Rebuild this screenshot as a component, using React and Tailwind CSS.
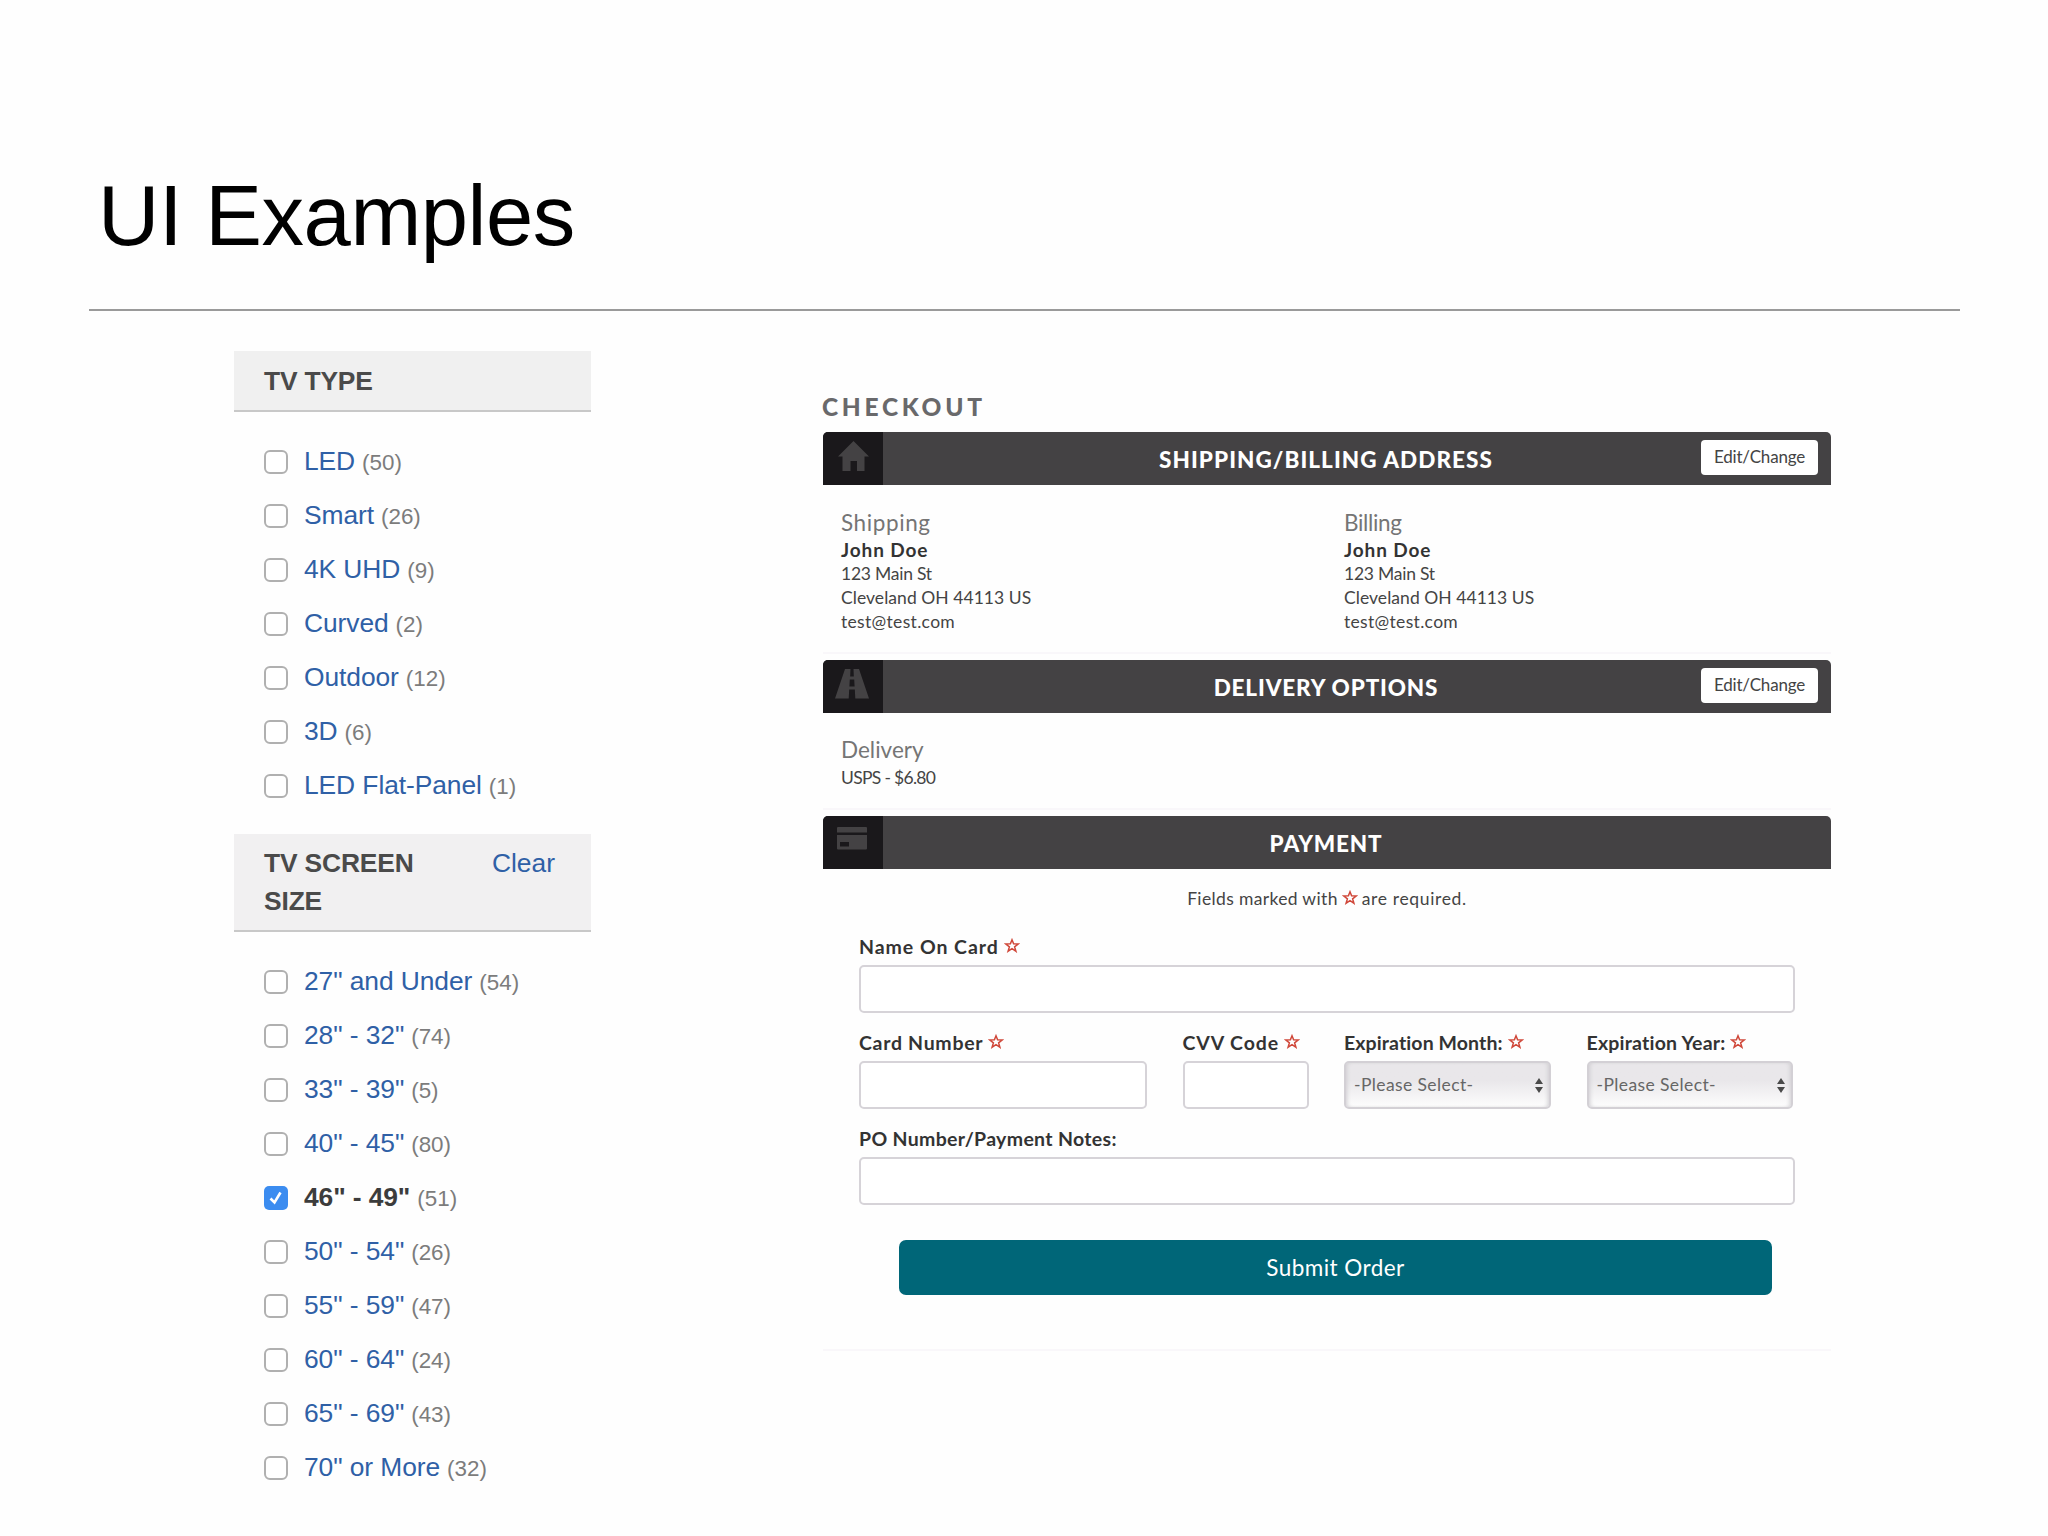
const TV_TYPES = [
  { label: "LED", count: 50 },
  { label: "Smart", count: 26 },
  { label: "4K UHD", count: 9 },
  { label: "Curved", count: 2 },
  { label: "Outdoor", count: 12 },
  { label: "3D", count: 6 },
  { label: "LED Flat-Panel", count: 1 },
];

const SCREEN_SIZES = [
  { label: '27" and Under', count: 54 },
  { label: '28" - 32"', count: 74 },
  { label: '33" - 39"', count: 5 },
  { label: '40" - 45"', count: 80 },
  { label: '46" - 49"', count: 51, checked: true },
  { label: '50" - 54"', count: 26 },
  { label: '55" - 59"', count: 47 },
  { label: '60" - 64"', count: 24 },
  { label: '65" - 69"', count: 43 },
  { label: '70" or More', count: 32 },
];

function Checkbox({ checked }) {
  if (checked) {
    return (
      <span className="flex size-6 items-center justify-center rounded-[5px] bg-[#3b8cf0]">
        <svg width="16" height="16" viewBox="0 0 16 16" fill="none" stroke="#fff" strokeWidth="2.6">
          <path d="M2.5 8.5 L6.5 12.5 L12.5 2.5" />
        </svg>
      </span>
    );
  }
  return <span className="size-6 rounded-[6px] border-2 border-[#b0b0b0] bg-white" />;
}

function FilterList({ items }) {
  return (
    <ul className="mt-[23px] pl-[29px]">
      {items.map(({ label, count, checked }) => (
        <li key={label} className="flex h-[54px] items-center whitespace-pre">
          <Checkbox checked={checked} />
          <span className="ml-[16px] flex items-baseline gap-[7px]">
            {checked ? (
              <span className="text-[26.4px] font-bold tracking-[-0.1px] text-[#3c3c3c]">{label}</span>
            ) : (
              <span className="text-[26.4px] tracking-[-0.08px] text-[#2f60a6]">{label}</span>
            )}
            <span className="text-[22.4px] text-[#7c7c7c]">({count})</span>
          </span>
        </li>
      ))}
    </ul>
  );
}

function HomeIcon() {
  return (
    <svg className="mt-[9px] ml-[15px]" width="31" height="30" viewBox="0 0 31 30" fill="#444244">
      <path d="M15.5 0 L31 15.5 H26.5 V30 H19 V20 H12.5 V30 H4.5 V15.5 H0 Z" />
    </svg>
  );
}

function RoadIcon() {
  return (
    <svg className="mt-[9px] ml-[12px]" width="34" height="30" viewBox="0 0 34 30" fill="#444244">
      <path
        fillRule="evenodd"
        d="M10 0 H15.5 L15.2 7.5 H18.8 L18.5 0 H24 L34 29.5 H20.3 L19.8 20.5 H14.2 L13.7 29.5 H0 Z M14.8 10.5 L14.4 17.5 H19.6 L19.2 10.5 Z"
      />
    </svg>
  );
}

function CardIcon() {
  return (
    <svg className="mt-[11px] ml-[14px]" width="30" height="23" viewBox="0 0 30 23" fill="#444244">
      <path
        fillRule="evenodd"
        d="M1 0 H29 Q30 0 30 1 V5.5 H0 V1 Q0 0 1 0 Z M0 8 H30 V21.5 Q30 22.5 29 22.5 H1 Q0 22.5 0 21.5 Z M3 15 V19.5 H12 V15 Z"
      />
    </svg>
  );
}

function Star({ className }) {
  return (
    <svg className={className} width="16" height="15" viewBox="0 0 16 15" fill="none" stroke="#d0483a" strokeWidth="1.5">
      <path d="M8 1.8 L9.6 5.8 L14.2 6 L10.6 8.8 L11.9 13.2 L8 10.7 L4.1 13.2 L5.4 8.8 L1.8 6 L6.4 5.8 Z" />
    </svg>
  );
}

function SectionBar({ icon, title, titleClass, action }) {
  return (
    <div className="grid h-[53px] grid-cols-[128px_1fr_130px] overflow-hidden rounded-t-[5px] bg-[#444244]">
      <div className="w-[60px] bg-[#1a181b]">{icon}</div>
      <h3 className={"pt-px text-center text-[22.5px] leading-[53px] font-black whitespace-nowrap text-white " + titleClass}>
        {title}
      </h3>
      {action && (
        <button className="mt-2 h-[35px] w-[117px] rounded-[4px] bg-white pb-[2px] text-[17px] tracking-[-0.2px] text-[#444]">
          {action}
        </button>
      )}
    </div>
  );
}

function Address({ kind, kindClass }) {
  return (
    <div className="leading-6">
      <h4 className={"text-[22.5px] leading-7 text-[#757575] " + kindClass}>{kind}</h4>
      <p className="text-[19px] leading-[25px] font-bold tracking-[0.9px] text-[#333]">John Doe</p>
      <p className="tracking-[-0.24px]">123 Main St</p>
      <p className="tracking-[0.05px]">Cleveland OH 44113 US</p>
      <p className="tracking-[0.32px]">test@test.com</p>
    </div>
  );
}

function Field({ label, labelClass, required, children }) {
  return (
    <div>
      <div className="mb-[6px] flex h-[25px] items-center pt-px whitespace-nowrap">
        <span className={"text-[19.5px] leading-6 font-bold text-[#333] " + labelClass}>{label}</span>
        {required && <Star className="mb-[3px] ml-[5px]" />}
      </div>
      {children}
    </div>
  );
}

function TextInput() {
  return <div className="h-12 rounded-[5px] border-2 border-[#d6d3d8] bg-white" />;
}

function Select() {
  return (
    <div className="flex h-12 items-center justify-between rounded-[5px] border-2 border-[#d3d0d5] bg-linear-to-b from-[#e9e7ea] from-40% to-[#fdfdfd] pr-[6px] pl-[8px] shadow-[inset_3px_0_4px_-2px_#cfcdd1,inset_-3px_0_4px_-2px_#cfcdd1]">
      <span className="text-[17.5px] tracking-[0.4px] text-[#666]">-Please Select-</span>
      <svg width="8" height="15" viewBox="0 0 8 15" fill="#4a4a4a">
        <path d="M4 0 L8 6 H0 Z M0 9 H8 L4 15 Z" />
      </svg>
    </div>
  );
}

export default function App() {
  return (
    <main className="h-[1536px] w-[2048px] overflow-hidden bg-[#fefefe] pt-[168px] font-['Liberation_Sans',Arial,sans-serif]">
      <h1 className="pl-[98px] text-[85px] leading-[96px] tracking-[-0.45px] text-black">UI Examples</h1>
      <div className="mt-[45px] ml-[89px] h-[2px] w-[1871px] bg-[#9a9a9a]" />

      <div className="mt-[40px] flex pl-[234px]">
        <aside className="w-[357px]">
          <div className="h-[61px] border-b-2 border-[#c8c8c8] bg-[#f0f0f0] pt-[11px] pl-[30px]">
            <h2 className="text-[26.4px] leading-[38px] font-bold tracking-[-0.2px] text-[#4a4a4a]">TV TYPE</h2>
          </div>
          <div className="pl-px">
            <FilterList items={TV_TYPES} />
          </div>
          <div className="mt-[21px] flex h-[98px] justify-between border-b-2 border-[#c8c8c8] bg-[#f1f0f1] pt-[10px] pr-[36px] pl-[30px] text-[26.4px] leading-[38px]">
            <h2 className="w-[170px] font-bold tracking-[-0.15px] text-[#4a4a4a]">TV SCREEN SIZE</h2>
            <a className="text-[#2f60a6]">Clear</a>
          </div>
          <div className="pl-px">
            <FilterList items={SCREEN_SIZES} />
          </div>
        </aside>

        <section className="mt-[41px] ml-[232px] w-[1008px] font-['Lato',sans-serif] text-[17.5px] text-[#444]">
          <h2 className="mb-[10px] -ml-px text-[24.5px] leading-[30px] font-black tracking-[3.7px] text-[#69696b]">CHECKOUT</h2>

          <SectionBar icon={<HomeIcon />} title="SHIPPING/BILLING ADDRESS" titleClass="tracking-[1.05px]" action="Edit/Change" />
          <div className="mb-[6px] grid h-[169px] grid-cols-[503px_1fr] border-b-2 border-[#f9f7fa] pt-[24px] pl-[18px]">
            <Address kind="Shipping" kindClass="tracking-[0.6px]" />
            <Address kind="Billing" kindClass="tracking-[-0.33px]" />
          </div>

          <SectionBar icon={<RoadIcon />} title="DELIVERY OPTIONS" titleClass="tracking-[0.85px]" action="Edit/Change" />
          <div className="mb-[6px] h-[97px] border-b-2 border-[#f9f7fa] pt-[23px] pl-[18px]">
            <h4 className="text-[22.5px] leading-7 tracking-[0.02px] text-[#757575]">Delivery</h4>
            <p className="leading-[27px] tracking-[-0.69px]">USPS - $6.80</p>
          </div>

          <SectionBar icon={<CardIcon />} title="PAYMENT" titleClass="tracking-[0.8px]" />
          <div className="h-[482px] border-b-2 border-[#f9f7fa] px-9 pt-[18px]">
            <p className="flex h-6 items-center justify-center leading-6">
              <span className="tracking-[0.35px]">Fields marked with</span>
              <Star className="mx-[4px] mb-[3px]" />
              <span className="tracking-[0.65px]">are required.</span>
            </p>
            <div className="mt-[23px] flex flex-col gap-[17px]">
              <Field label="Name On Card" labelClass="tracking-[0.95px]" required>
                <TextInput />
              </Field>
              <div className="grid grid-cols-[288px_126px_207px_206px] gap-x-[35.5px]">
                <Field label="Card Number" labelClass="tracking-[0.7px]" required>
                  <TextInput />
                </Field>
                <Field label="CVV Code" labelClass="tracking-[0.9px]" required>
                  <TextInput />
                </Field>
                <Field label="Expiration Month:" labelClass="tracking-[0.1px]" required>
                  <Select />
                </Field>
                <Field label="Expiration Year:" labelClass="tracking-[0.2px]" required>
                  <Select />
                </Field>
              </div>
              <Field label="PO Number/Payment Notes:" labelClass="tracking-[0.33px]">
                <TextInput />
              </Field>
            </div>
            <button className="mt-[35px] ml-10 h-[55px] w-[873px] rounded-[7px] bg-[#006678] text-[22.5px] tracking-[0.45px] text-white">
              Submit Order
            </button>
          </div>
        </section>
      </div>
    </main>
  );
}
